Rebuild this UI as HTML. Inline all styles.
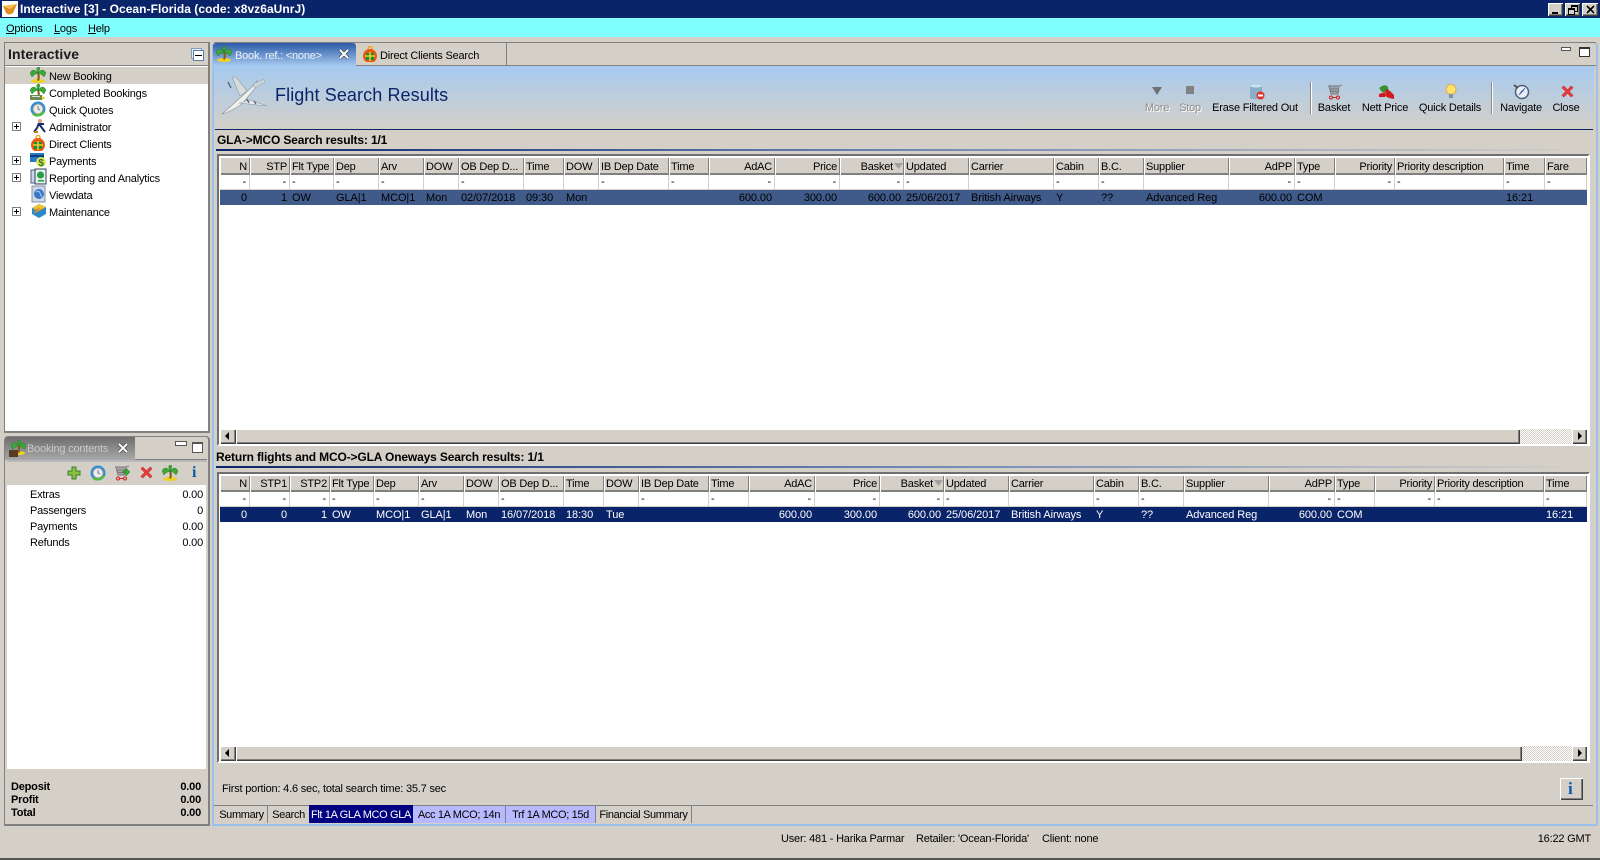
<!DOCTYPE html>
<html><head><meta charset="utf-8"><title>Interactive</title>
<style>
html,body{margin:0;padding:0;width:1600px;height:860px;overflow:hidden;background:#d4d0c8}
body{position:relative;font:11px/14px "Liberation Sans",sans-serif;color:#000;letter-spacing:-.2px}
.a{position:absolute;white-space:nowrap}
.ctr{transform:translateX(-50%)}
table{position:absolute;left:220px;border-collapse:separate;border-spacing:0;table-layout:fixed;width:1367px;font:11px/14px "Liberation Sans",sans-serif;letter-spacing:-.2px}
td{padding:0 3px 0 2px;overflow:hidden;white-space:nowrap;box-sizing:border-box}
.h td{height:18px;background:#d4d0c8;box-shadow:inset 1px 1px 0 #fff,inset -1px -2px 0 #808080;padding-top:1px}
.h2 td{height:17px;padding-top:0}
.f td{height:15px;background:#fff;border-right:1px solid #d4d0c8;border-bottom:1px solid #d4d0c8}
.s1 td{height:15px;background:#405a8a;color:#000;letter-spacing:-.08px}
.s2 td{height:15px;background:#0a246a;color:#fff;letter-spacing:-.08px}
.r{text-align:right}
.bv{background:#d4d0c8;box-shadow:inset 1px 1px 0 #fff,inset -1px -1px 0 #404040,inset -2px -2px 0 #808080}
.chk{background:repeating-conic-gradient(#fff 0 25%,#d4d0c8 0 50%) 0 0/2px 2px}
.sec{font-weight:bold;font-size:12px;letter-spacing:-.15px}
.ln{height:2px;left:216px;width:1372px;background:linear-gradient(90deg,#0a246a,#6f86b4 50%,#d4d0c8)}
.tb{color:#000;top:101px}
.tree{left:49px}
.bt{height:17px;text-align:center;line-height:18px;letter-spacing:-.35px}
svg{position:absolute;overflow:visible}
</style></head><body>
<svg width="0" height="0" style="position:absolute">
<defs>
<symbol id="palm" viewBox="0 0 16 16"><ellipse cx="8" cy="14" rx="7" ry="2" fill="#f0d020"/><path d="M8 6Q9.500 10 8 13.500" stroke="#8a5a10" stroke-width="2" fill="none"/><path d="M8 6Q3 0 0 6Q1 8 2 10Q4 7 8 6ZM8 6Q13 0 16 6Q15 8 14 10Q12 7 8 6ZM8 6Q5 0 9 0Q11 1 8 6Z" fill="#3aa83a" stroke="#1a701a" stroke-width=".4"/></symbol>
<symbol id="clock" viewBox="0 0 16 16"><circle cx="8" cy="8" r="7.500" fill="#2a8fd8"/><circle cx="8" cy="8" r="5" fill="#ececec" stroke="#999"/><path d="M8 5V8L10 9" stroke="#777" fill="none"/><path d="M3 13Q8 17 14 11" stroke="#4cc030" stroke-width="2" fill="none"/></symbol>
<symbol id="gift" viewBox="0 0 16 16"><circle cx="8" cy="2.500" r="2" fill="none" stroke="#e8a010" stroke-width="1.300"/><circle cx="8" cy="10" r="7" fill="#e85a10"/><rect x="4" y="7" width="8" height="7" fill="#208a40"/><path d="M8 6V15M3 10H13" stroke="#f0d020" stroke-width="1.500"/></symbol>
<symbol id="x" viewBox="0 0 16 16"><path d="M2 4L4 2L8 6L12 2L14 4L10 8L14 12L12 14L8 10L4 14L2 12L6 8Z" fill="#e83a3a" stroke="#b02020" stroke-width=".5"/></symbol>
<symbol id="cart" viewBox="0 0 16 16"><path d="M1 2H11L15 1M2 2L4 10H11L12 2M4 2.500V10M6 2.500V10M8 2.500V10M10 2.500V10M3 5H12M3 7.500H12" stroke="#777" fill="none" stroke-width=".9"/><circle cx="4" cy="13.500" r="1.500" fill="none" stroke="#d02020"/><circle cx="11" cy="13.500" r="1.500" fill="none" stroke="#d02020"/><path d="M5.500 13.500H9.500" stroke="#d02020"/></symbol>
</defs></svg>

<!-- title bar -->
<div class="a" style="left:0;top:0;width:1600px;height:18px;background:#0a246a"></div>
<svg style="left:2px;top:1px" width="16" height="16" viewBox="0 0 16 16"><rect width="16" height="16" fill="#fff"/><path d="M1 5L15 3L11 12Q7 15 4 12Z" fill="#e09020"/><path d="M1 5L15 3L8 8Z" fill="#f4c050"/></svg>
<div class="a" style="left:20px;top:2px;color:#fff;font-weight:bold;font-size:12px;letter-spacing:.05px">Interactive [3] - Ocean-Florida (code: x8vz6aUnrJ)</div>
<div class="a bv" style="left:1548px;top:3px;width:15px;height:13px"><div class="a" style="left:4px;top:9px;width:6px;height:2px;background:#000"></div></div>
<div class="a bv" style="left:1565px;top:3px;width:15px;height:13px"><div class="a" style="left:6px;top:2px;width:5px;height:4px;border:1px solid #000;border-top-width:2px"></div><div class="a" style="left:3px;top:5px;width:5px;height:4px;border:1px solid #000;border-top-width:2px;background:#d4d0c8"></div></div>
<div class="a bv" style="left:1582px;top:3px;width:16px;height:13px"><svg style="left:4px;top:2px" width="9" height="9" viewBox="0 0 9 9"><path d="M1 1L8 8M8 1L1 8" stroke="#000" stroke-width="1.600"/></svg></div>

<!-- menu -->
<div class="a" style="left:0;top:18px;width:1600px;height:19px;background:#80ffff"></div>
<div class="a" style="left:6px;top:22px"><u>O</u>ptions</div>
<div class="a" style="left:54px;top:22px"><u>L</u>ogs</div>
<div class="a" style="left:88px;top:22px"><u>H</u>elp</div>

<!-- left top panel -->
<div class="a" style="left:4px;top:42px;width:203px;height:388px;border:1px solid #808080;border-width:1px 2px 2px 1px;background:#fff"></div>
<div class="a" style="left:5px;top:43px;width:203px;height:22px;background:#d4d0c8;border-bottom:1px solid #808080"></div>
<div class="a" style="left:8px;top:46px;font-weight:bold;font-size:14px;line-height:16px;color:#1a1a1a;letter-spacing:.1px">Interactive</div>
<div class="a" style="left:191px;top:48px;width:9px;height:9px;border:1px solid #7f9db9;background:#e8eef4"></div>
<div class="a" style="left:193px;top:50px;width:9px;height:9px;border:1px solid #5a7fa8;background:#fff"><div class="a" style="left:1px;top:4px;width:7px;height:1px;background:#000"></div></div>
<div class="a" style="left:5px;top:67px;width:203px;height:17px;background:#d4d0c8"></div>

<svg style="left:30px;top:67px" width="16" height="16"><use href="#palm"/></svg>
<svg style="left:30px;top:84px" width="16" height="16"><use href="#palm"/><rect x="0" y="11" width="12" height="5" fill="#6a8a50"/><rect x="2" y="12" width="8" height="1" fill="#ddd"/></svg>
<svg style="left:30px;top:101px" width="16" height="16"><use href="#clock"/></svg>
<svg style="left:32px;top:118px" width="16" height="16" viewBox="0 0 16 16"><circle cx="8" cy="3" r="2" fill="#e0a070"/><path d="M7 5L5 10L2 14M7 6L10 10L13 14M7 6L12 6" stroke="#1a2a6a" stroke-width="2" fill="none"/><path d="M2 14H6" stroke="#c08020" stroke-width="2"/></svg>
<svg style="left:30px;top:135px" width="16" height="16"><use href="#gift"/></svg>
<svg style="left:30px;top:152px" width="16" height="16" viewBox="0 0 16 16"><rect y="1" width="14" height="9" fill="#2a78c8"/><rect y="3" width="14" height="2" fill="#10407a"/><circle cx="11" cy="10" r="5" fill="#e8e060"/><text x="11" y="14" font-size="10" font-weight="bold" text-anchor="middle" fill="#20802a" font-family="Liberation Sans">$</text></svg>
<svg style="left:31px;top:169px" width="16" height="16" viewBox="0 0 16 16"><rect x="0" y="1" width="8" height="13" fill="#c8d8e8" stroke="#506080"/><rect x="4" y="0" width="11" height="15" fill="#e8f0e8" stroke="#304060"/><circle cx="9.500" cy="6" r="3.500" fill="#20a040"/><rect x="7" y="11" width="6" height="1.500" fill="#20a040"/></svg>
<svg style="left:31px;top:186px" width="16" height="16" viewBox="0 0 16 16"><rect x="1" y="0" width="13" height="16" fill="#d0d8e8" stroke="#8090a8"/><circle cx="8" cy="8" r="5" fill="#3a78c8"/><path d="M5 6Q8 4 9 7T11 11" stroke="#a0d8f0" fill="none"/></svg>
<svg style="left:31px;top:203px" width="16" height="16" viewBox="0 0 16 16"><path d="M1 5L8 1L15 4L15 11L8 15L1 11Z" fill="#2a88c8"/><path d="M1 5L8 1L15 4L8 8Z" fill="#f0c030"/><path d="M3 8L9 5M3 10L11 6" stroke="#e09020"/></svg>

<div class="a tree" style="top:70px">New Booking</div>
<div class="a tree" style="top:87px">Completed Bookings</div>
<div class="a tree" style="top:104px">Quick Quotes</div>
<div class="a tree" style="top:121px">Administrator</div>
<div class="a tree" style="top:138px">Direct Clients</div>
<div class="a tree" style="top:155px">Payments</div>
<div class="a tree" style="top:172px">Reporting and Analytics</div>
<div class="a tree" style="top:189px">Viewdata</div>
<div class="a tree" style="top:206px">Maintenance</div>

<svg style="left:12px;top:122px" width="9" height="9" viewBox="0 0 9 9"><rect x=".5" y=".5" width="8" height="8" fill="#fff" stroke="#808080"/><path d="M2 4.500H7M4.500 2V7" stroke="#000"/></svg>
<svg style="left:12px;top:156px" width="9" height="9" viewBox="0 0 9 9"><rect x=".5" y=".5" width="8" height="8" fill="#fff" stroke="#808080"/><path d="M2 4.500H7M4.500 2V7" stroke="#000"/></svg>
<svg style="left:12px;top:173px" width="9" height="9" viewBox="0 0 9 9"><rect x=".5" y=".5" width="8" height="8" fill="#fff" stroke="#808080"/><path d="M2 4.500H7M4.500 2V7" stroke="#000"/></svg>
<svg style="left:12px;top:207px" width="9" height="9" viewBox="0 0 9 9"><rect x=".5" y=".5" width="8" height="8" fill="#fff" stroke="#808080"/><path d="M2 4.500H7M4.500 2V7" stroke="#000"/></svg>

<!-- left bottom panel -->
<div class="a" style="left:4px;top:436px;width:203px;height:387px;border:1px solid #808080;border-width:1px 2px 2px 1px;border-top-left-radius:4px;border-top-right-radius:4px;background:#d4d0c8"></div>
<div class="a" style="left:5px;top:437px;width:130px;height:23px;background:linear-gradient(#6e6e6e,#a8a8a8);border-top-left-radius:3px"></div>
<div class="a" style="left:135px;top:459px;width:72px;height:1px;background:#808080"></div>
<div class="a" style="left:7px;top:460px;width:200px;height:2px;background:#b8b8bc"></div>
<svg style="left:8px;top:440px" width="18" height="18" viewBox="0 0 18 18"><use href="#palm" x="3" width="15" height="15"/><rect x="1" y="10" width="9" height="7" fill="#5a3a20"/></svg>
<div class="a" style="left:27px;top:442px;color:#c8c8c8">Booking contents</div>
<svg style="left:117px;top:442px" width="12" height="12" viewBox="0 0 12 12"><path d="M2 2L10 10M10 2L2 10" stroke="#444" stroke-width="3.400"/><path d="M2 2L10 10M10 2L2 10" stroke="#fff" stroke-width="2"/></svg>
<div class="a" style="left:175px;top:441px;width:10px;height:3px;border:1px solid #555;background:#fff"></div>
<div class="a" style="left:192px;top:442px;width:9px;height:8px;border:1px solid #555;border-top-width:2px;background:#fff"></div>

<svg style="left:67px;top:466px" width="14" height="14" viewBox="0 0 14 14"><path d="M5 1H9V5H13V9H9V13H5V9H1V5H5Z" fill="#88c040" stroke="#3a8030"/></svg>
<svg style="left:90px;top:465px" width="16" height="16"><use href="#clock"/></svg>
<svg style="left:114px;top:465px" width="16" height="16"><use href="#cart"/><path d="M9 6H12V3L16 7L12 11V8H9Z" fill="#30b030" stroke="#106010" stroke-width=".4"/></svg>
<svg style="left:139px;top:465px" width="15" height="15"><use href="#x"/></svg>
<svg style="left:162px;top:465px" width="16" height="16"><use href="#palm"/></svg>
<div class="a" style="left:192px;top:464px;font:bold 16px/18px 'Liberation Serif',serif;color:#0a58a8">i</div>

<div class="a" style="left:7px;top:485px;width:199px;height:284px;background:#fff"></div>
<div class="a" style="left:30px;top:488px">Extras</div><div class="a" style="right:1397px;top:488px">0.00</div>
<div class="a" style="left:30px;top:504px">Passengers</div><div class="a" style="right:1397px;top:504px">0</div>
<div class="a" style="left:30px;top:520px">Payments</div><div class="a" style="right:1397px;top:520px">0.00</div>
<div class="a" style="left:30px;top:536px">Refunds</div><div class="a" style="right:1397px;top:536px">0.00</div>
<div class="a" style="left:11px;top:781px;font-weight:bold;line-height:13px">Deposit<br>Profit<br>Total</div>
<div class="a" style="right:1399px;top:781px;font-weight:bold;line-height:13px;text-align:right">0.00<br>0.00<br>0.00</div>

<!-- main panel -->
<div class="a" style="left:212px;top:42px;width:1382px;height:781px;border:1px solid #808080;border-bottom:2px solid #9cc0ec;border-right:2px solid #9cc0ec;border-left:2px solid #9cc0ec;border-top-right-radius:4px;border-top-left-radius:4px;background:#d4d0c8"></div>
<div class="a" style="left:214px;top:65px;width:1382px;height:1px;background:#808080"></div>
<div class="a" style="left:214px;top:66px;width:1380px;height:63px;background:linear-gradient(#a6caf0,#d4d0c8)"></div>
<div class="a" style="left:215px;top:129px;width:1378px;height:1px;background:#0a246a"></div>
<!-- active tab -->
<div class="a" style="left:213px;top:43px;width:143px;height:23px;background:linear-gradient(#2c5aa8,#a6caf0);border-radius:3px 3px 0 0"></div>
<div class="a" style="left:356px;top:43px;width:150px;height:22px;border-right:1px solid #808080"></div>
<svg style="left:216px;top:45px" width="16" height="18"><use href="#palm"/></svg>
<div class="a" style="left:235px;top:49px;color:#f0f4fa">Book. ref.: &lt;none&gt;</div>
<svg style="left:338px;top:48px" width="12" height="12" viewBox="0 0 12 12"><path d="M2 2L10 10M10 2L2 10" stroke="#444" stroke-width="3.400"/><path d="M2 2L10 10M10 2L2 10" stroke="#fff" stroke-width="2"/></svg>
<svg style="left:362px;top:46px" width="16" height="16"><use href="#gift"/></svg>
<div class="a" style="left:380px;top:49px">Direct Clients Search</div>
<div class="a" style="left:1561px;top:47px;width:8px;height:2px;border:1px solid #555;background:#fff"></div>
<div class="a" style="left:1579px;top:47px;width:9px;height:7px;border:1px solid #333;border-top-width:2px;background:#fff"></div>

<!-- plane -->
<svg style="left:220px;top:76px" width="50" height="40" viewBox="0 0 50 40"><path d="M2 38Q18 24 32 11L37 5L36 11L22 28Q10 36 2 38Z" fill="#f0f0e8" stroke="#8a98a8" stroke-width=".7"/><path d="M20 20L12 1L16 1L27 15Z" fill="#d8dcd8" stroke="#8a98a8" stroke-width=".6"/><path d="M19 27L47 30L30 24Z" fill="#e8ecec" stroke="#8a98a8" stroke-width=".6"/><path d="M33 8L44 3L45 6L35 12Z" fill="#ccd4d8" stroke="#8a98a8" stroke-width=".5"/><path d="M8 6L11 12M27 23L29 27M34 25L36 28" stroke="#667" stroke-width="1.400"/></svg>
<div class="a" style="left:275px;top:84px;font-size:18px;line-height:22px;color:#0a246a;letter-spacing:.1px">Flight Search Results</div>

<!-- toolbar -->
<svg style="left:1151px;top:86px" width="12" height="10" viewBox="0 0 12 10"><path d="M1 1H11L6 9Z" fill="#707070"/></svg>
<div class="a" style="left:1186px;top:86px;width:8px;height:8px;background:#808080"></div>
<svg style="left:1249px;top:84px" width="16" height="16" viewBox="0 0 16 16"><rect x="1" y="1" width="12" height="14" rx="2" fill="#8ab0c8"/><ellipse cx="7" cy="2" rx="6" ry="1.500" fill="#c8e0f0"/><circle cx="11.500" cy="11.500" r="4" fill="#e03030"/><rect x="9" y="10.500" width="5" height="2" fill="#fff"/></svg>
<div class="a ctr" style="left:1157px;top:101px;color:#8c8c8c;text-shadow:1px 1px 0 #fff">More</div>
<div class="a ctr" style="left:1190px;top:101px;color:#8c8c8c;text-shadow:1px 1px 0 #fff">Stop</div>
<div class="a ctr tb" style="left:1255px">Erase Filtered Out</div>
<div class="a" style="left:1310px;top:82px;width:1px;height:32px;background:#888;box-shadow:1px 0 0 #fff"></div>
<svg style="left:1327px;top:84px" width="16" height="16"><use href="#cart"/></svg>
<div class="a ctr tb" style="left:1334px">Basket</div>
<svg style="left:1378px;top:84px" width="16" height="16" viewBox="0 0 16 16"><path d="M1 4Q7 -1 10 3L11 8H4Z" fill="#3a9030"/><path d="M1 10L7 8V13L1 13ZM8 5L12 7L16 11V15L11 14L7 12Z" fill="#d01a20"/></svg>
<div class="a ctr tb" style="left:1385px">Nett Price</div>
<svg style="left:1445px;top:84px" width="12" height="16" viewBox="0 0 12 16"><circle cx="6" cy="5.500" r="5" fill="#ffe070" stroke="#e0b040"/><rect x="4" y="10" width="4" height="4" fill="#8090a8"/></svg>
<div class="a ctr tb" style="left:1450px">Quick Details</div>
<div class="a" style="left:1491px;top:82px;width:1px;height:32px;background:#888;box-shadow:1px 0 0 #fff"></div>
<svg style="left:1514px;top:84px" width="16" height="16" viewBox="0 0 16 16"><circle cx="8" cy="8" r="6.500" fill="#e8eef4" stroke="#50607a" stroke-width="1.500"/><path d="M5 11L9 7L11 4L7 8Z" fill="#e03030" stroke="#2a5aa8" stroke-width=".6"/><path d="M0 1L4 4" stroke="#505050" stroke-width="2"/></svg>
<div class="a ctr tb" style="left:1521px">Navigate</div>
<svg style="left:1560px;top:84px" width="15" height="15"><use href="#x"/></svg>
<div class="a ctr tb" style="left:1566px">Close</div>

<!-- section 1 -->
<div class="a sec" style="left:217px;top:133px">GLA-&gt;MCO Search results: 1/1</div>
<div class="a ln" style="top:149px"></div>
<div class="a" style="left:217px;top:154px;width:1369px;height:288px;background:#fff;border:1px solid;border-width:2px 2px 2px 2px;border-color:#707070 #fff #fff #707070;box-sizing:content-box"></div>
<table style="top:157px"><colgroup><col style="width:30px"><col style="width:40px"><col style="width:44px"><col style="width:45px"><col style="width:45px"><col style="width:35px"><col style="width:65px"><col style="width:40px"><col style="width:35px"><col style="width:70px"><col style="width:40px"><col style="width:66px"><col style="width:65px"><col style="width:64px"><col style="width:65px"><col style="width:85px"><col style="width:45px"><col style="width:45px"><col style="width:85px"><col style="width:66px"><col style="width:40px"><col style="width:60px"><col style="width:109px"><col style="width:41px"><col style="width:42px"></colgroup>
<tr class="h"><td class="r">N</td><td class="r">STP</td><td>Flt Type</td><td>Dep</td><td>Arv</td><td>DOW</td><td>OB Dep D...</td><td>Time</td><td>DOW</td><td>IB Dep Date</td><td>Time</td><td class="r">AdAC</td><td class="r">Price</td><td class="r" style="padding-right:11px">Basket</td><td>Updated</td><td>Carrier</td><td>Cabin</td><td>B.C.</td><td>Supplier</td><td class="r">AdPP</td><td>Type</td><td class="r">Priority</td><td>Priority description</td><td>Time</td><td>Fare</td></tr>
<tr class="f"><td class="r">-</td><td class="r">-</td><td>-</td><td>-</td><td>-</td><td></td><td>-</td><td></td><td></td><td>-</td><td>-</td><td class="r">-</td><td class="r">-</td><td class="r">-</td><td>-</td><td></td><td>-</td><td>-</td><td></td><td class="r">-</td><td>-</td><td class="r">-</td><td>-</td><td>-</td><td>-</td></tr>
<tr class="s1"><td class="r">0</td><td class="r">1</td><td>OW</td><td>GLA|1</td><td>MCO|1</td><td>Mon</td><td>02/07/2018</td><td>09:30</td><td>Mon</td><td></td><td></td><td class="r">600.00</td><td class="r">300.00</td><td class="r">600.00</td><td>25/06/2017</td><td>British Airways</td><td>Y</td><td>??</td><td>Advanced Reg</td><td class="r">600.00</td><td>COM</td><td></td><td></td><td>16:21</td><td></td></tr>
</table>
<svg style="left:894px;top:163px" width="9" height="6" viewBox="0 0 9 6"><path d="M0 0H9L4.500 6Z" fill="#a0a0a0"/></svg>
<div class="a chk" style="left:220px;top:429px;width:1367px;height:15px"></div>
<div class="a bv" style="left:220px;top:429px;width:16px;height:15px"><svg style="left:5px;top:3px" width="5" height="8" viewBox="0 0 5 8"><path d="M4 0V8L0 4Z"/></svg></div>
<div class="a bv" style="left:236px;top:429px;width:1284px;height:15px"></div>
<div class="a bv" style="left:1572px;top:429px;width:15px;height:15px"><svg style="left:6px;top:3px" width="5" height="8" viewBox="0 0 5 8"><path d="M0 0V8L4 4Z"/></svg></div>

<!-- section 2 -->
<div class="a sec" style="left:216px;top:450px">Return flights and MCO-&gt;GLA Oneways Search results: 1/1</div>
<div class="a ln" style="top:466px"></div>
<div class="a" style="left:217px;top:472px;width:1369px;height:287px;background:#fff;border:1px solid;border-width:2px 2px 2px 2px;border-color:#707070 #fff #fff #707070;box-sizing:content-box"></div>
<table style="top:475px"><colgroup><col style="width:30px"><col style="width:40px"><col style="width:40px"><col style="width:44px"><col style="width:45px"><col style="width:45px"><col style="width:35px"><col style="width:65px"><col style="width:40px"><col style="width:35px"><col style="width:70px"><col style="width:40px"><col style="width:66px"><col style="width:65px"><col style="width:64px"><col style="width:65px"><col style="width:85px"><col style="width:45px"><col style="width:45px"><col style="width:85px"><col style="width:66px"><col style="width:40px"><col style="width:60px"><col style="width:109px"><col style="width:43px"></colgroup>
<tr class="h h2"><td class="r">N</td><td class="r">STP1</td><td class="r">STP2</td><td>Flt Type</td><td>Dep</td><td>Arv</td><td>DOW</td><td>OB Dep D...</td><td>Time</td><td>DOW</td><td>IB Dep Date</td><td>Time</td><td class="r">AdAC</td><td class="r">Price</td><td class="r" style="padding-right:11px">Basket</td><td>Updated</td><td>Carrier</td><td>Cabin</td><td>B.C.</td><td>Supplier</td><td class="r">AdPP</td><td>Type</td><td class="r">Priority</td><td>Priority description</td><td>Time</td></tr>
<tr class="f"><td class="r">-</td><td class="r">-</td><td class="r">-</td><td>-</td><td>-</td><td>-</td><td></td><td>-</td><td></td><td></td><td>-</td><td>-</td><td class="r">-</td><td class="r">-</td><td class="r">-</td><td>-</td><td></td><td>-</td><td>-</td><td></td><td class="r">-</td><td>-</td><td class="r">-</td><td>-</td><td>-</td></tr>
<tr class="s2"><td class="r">0</td><td class="r">0</td><td class="r">1</td><td>OW</td><td>MCO|1</td><td>GLA|1</td><td>Mon</td><td>16/07/2018</td><td>18:30</td><td>Tue</td><td></td><td></td><td class="r">600.00</td><td class="r">300.00</td><td class="r">600.00</td><td>25/06/2017</td><td>British Airways</td><td>Y</td><td>??</td><td>Advanced Reg</td><td class="r">600.00</td><td>COM</td><td></td><td></td><td>16:21</td></tr>
</table>
<svg style="left:934px;top:480px" width="9" height="6" viewBox="0 0 9 6"><path d="M0 0H9L4.500 6Z" fill="#a0a0a0"/></svg>
<div class="a chk" style="left:220px;top:746px;width:1367px;height:15px"></div>
<div class="a bv" style="left:220px;top:746px;width:16px;height:15px"><svg style="left:5px;top:3px" width="5" height="8" viewBox="0 0 5 8"><path d="M4 0V8L0 4Z"/></svg></div>
<div class="a bv" style="left:236px;top:746px;width:1286px;height:15px"></div>
<div class="a bv" style="left:1572px;top:746px;width:15px;height:15px"><svg style="left:6px;top:3px" width="5" height="8" viewBox="0 0 5 8"><path d="M0 0V8L4 4Z"/></svg></div>

<!-- bottom -->
<div class="a" style="left:222px;top:782px">First portion: 4.6 sec, total search time: 35.7 sec</div>
<div class="a bv" style="left:1560px;top:778px;width:23px;height:22px"><div class="a" style="left:8px;top:2px;font:bold 17px/18px 'Liberation Serif',serif;color:#0a58a8">i</div></div>
<div class="a" style="left:214px;top:805px;width:1379px;height:1px;background:#808080"></div>
<div class="a bt" style="left:216px;top:806px;width:51px;border-right:1px solid #808080">Summary</div>
<div class="a bt" style="left:268px;top:806px;width:41px">Search</div>
<div class="a bt" style="left:309px;top:805px;width:104px;height:18px;background:#000080;color:#fff;line-height:20px">Flt 1A GLA MCO GLA</div>
<div class="a bt" style="left:413px;top:806px;width:92px;background:#b9b9ff;border-right:1px solid #808080">Acc 1A MCO; 14n</div>
<div class="a bt" style="left:506px;top:806px;width:89px;background:#b9b9ff;border-right:1px solid #808080">Trf 1A MCO; 15d</div>
<div class="a bt" style="left:596px;top:806px;width:95px;border-right:1px solid #808080">Financial Summary</div>

<!-- status bar -->
<div class="a" style="left:781px;top:832px">User: 481 - Harika Parmar</div>
<div class="a" style="left:916px;top:832px">Retailer: 'Ocean-Florida'</div>
<div class="a" style="left:1042px;top:832px">Client: none</div>
<div class="a" style="right:9px;top:832px">16:22 GMT</div>
<div class="a" style="left:0;top:858px;width:1600px;height:2px;background:#555"></div>
</body></html>
